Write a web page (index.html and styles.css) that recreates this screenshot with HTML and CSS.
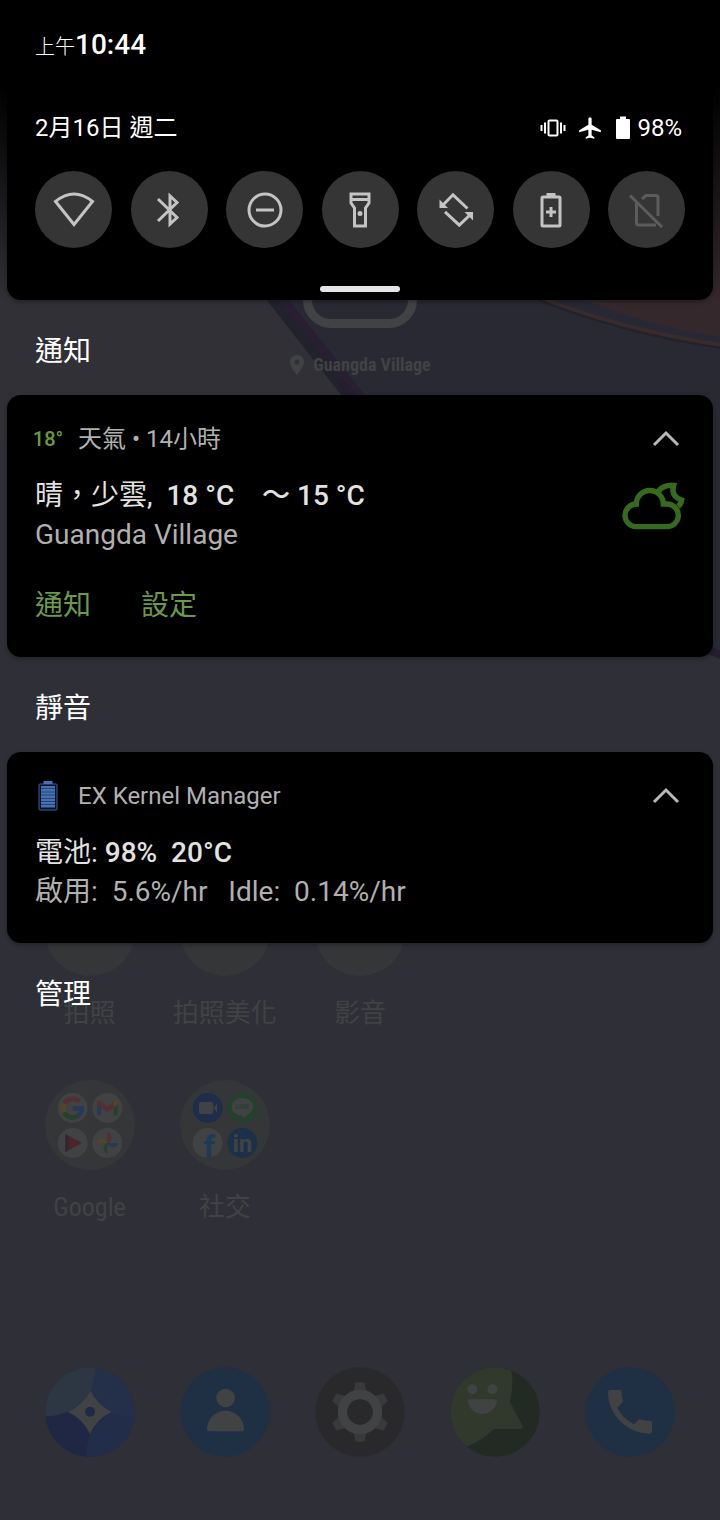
FILE: index.html
```html
<!DOCTYPE html>
<html lang="zh-TW">
<head>
  <meta charset="UTF-8">
  <meta name="viewport" content="width=device-width, initial-scale=1.0">
  <title>通知</title>
  <link rel="stylesheet" href="styles.css">
</head>
<body>

  <!-- dimmed home screen under the shade -->
  <div class="home">
    <svg class="wallpaper" viewBox="0 0 720 1520" preserveAspectRatio="none" aria-hidden="true">
      <rect width="720" height="1520" fill="#2f2f37"/>
      <path d="M0 0H272V300L360 394L400 440H0z" fill="#303036"/>
      <path d="M230 250L360 410Q480 560 720 655V0H230z" fill="#292934"/>
      <path d="M262 286L352 401" stroke="#22222c" stroke-width="10"/>
      <path d="M272 286L368 406" stroke="#281f32" stroke-width="9"/>
      <path d="M340 380Q480 570 730 658" stroke="#241e30" stroke-width="8" fill="none"/>
      <path d="M500 280Q610 330 720 346V0H500z" fill="#282834"/>
      <path d="M560 290Q640 325 720 337V0H560z" fill="#34282d"/>
      <path d="M530 294Q620 330 722 345" stroke="#392b2d" stroke-width="4" fill="none"/>
      <path d="M524 294Q620 334 722 348" stroke="#23222a" stroke-width="2" fill="none"/>
    </svg>

    <div class="clock-widget">
      <div class="clock-digit"></div>
      <div class="place">
        <svg width="16" height="22" viewBox="0 0 16 22" aria-hidden="true"><path fill-rule="evenodd" d="M8 1C4 1 1 4 1 8c0 5 7 13 7 13s7-8 7-13c0-4-3-7-7-7zm0 4.500a2.500 2.500 0 1 1 0 5 2.500 2.500 0 0 1 0-5z" fill="#414243"/></svg>
        <span>Guangda Village</span>
      </div>
    </div>

    <div class="folders">
      <div class="folder"><span class="folder-icon"></span><span class="folder-name">拍照</span></div>
      <div class="folder"><span class="folder-icon"></span><span class="folder-name">拍照美化</span></div>
      <div class="folder"><span class="folder-icon"></span><span class="folder-name">影音</span></div>
    </div>

    <div class="folders">
      <div class="folder">
        <svg class="folder-icon" viewBox="0 0 270 270" aria-hidden="true">
          <g fill="#414243"><circle cx="83" cy="84" r="45"/><circle cx="187" cy="84" r="45"/><circle cx="83" cy="189" r="45"/><circle cx="187" cy="189" r="45"/></g>
          <g fill="none" stroke-width="14">
            <path d="M103 65A28 28 0 0 0 58 71" stroke="#52302f"/>
            <path d="M58 71A28 28 0 0 0 58 98" stroke="#534628"/>
            <path d="M58 98A28 28 0 0 0 101 106" stroke="#25402f"/>
            <path d="M101 106A28 28 0 0 0 110 85H83" stroke="#273a55"/>
          </g>
          <path d="M156 65V106H168V78z" fill="#273a55"/>
          <path d="M218 65V106H206V78z" fill="#25402f"/>
          <path d="M156 65Q160 58 168 64L187 80L206 64Q214 58 218 65V74L187 97L156 74z" fill="#52302f"/>
          <path d="M206 64Q214 58 218 65V74L206 82z" fill="#534628"/>
          <path d="M61 162L111 189L61 216z" fill="#4e252d"/>
          <path d="M61 162L70 167V211L61 216z" fill="#302732"/>
          <path d="M73 170V208M98 182V196" stroke="#38242b" stroke-width="3" stroke-dasharray="4 4"/>
          <path d="M187 156A18 18 0 0 1 187 190z" fill="#52302f"/>
          <path d="M220 189A17 17 0 0 1 187 189z" fill="#273a55"/>
          <path d="M187 221A17 17 0 0 1 187 189z" fill="#25402f"/>
          <path d="M154 189A17 17 0 0 1 187 189z" fill="#534628"/>
        </svg>
        <span class="folder-name">Google</span>
      </div>
      <div class="folder">
        <svg class="folder-icon" viewBox="0 0 270 270" aria-hidden="true">
          <circle cx="83" cy="84" r="45" fill="#1f2d4a"/>
          <circle cx="187" cy="84" r="45" fill="#24402e"/>
          <circle cx="83" cy="189" r="45" fill="#414243"/>
          <circle cx="187" cy="189" r="45" fill="#1d3049"/>
          <rect x="57" y="66" width="43" height="36" rx="8" fill="#414243"/>
          <path d="M101 84L111 71V98z" fill="#414243"/>
          <path d="M187 54C207 54 219 66 219 80C219 96 200 107 187 114C186 110 187 107 183 106C166 105 155 94 155 80C155 66 168 54 187 54z" fill="#414243"/>
          <text class="logo-line" x="187" y="87">LINE</text>
          <text class="logo-f" x="88" y="233">f</text>
          <text class="logo-in" x="187" y="215">in</text>
        </svg>
        <span class="folder-name">社交</span>
      </div>
    </div>

    <div class="dock">
      <svg class="dock-icon" viewBox="0 0 270 270" aria-hidden="true">
        <clipPath id="disc"><circle cx="135" cy="135" r="134"/></clipPath>
        <g clip-path="url(#disc)">
          <rect width="270" height="270" fill="#212a46"/>
          <path d="M135 0H270V154Q225 150 195 134Q155 110 135 70z" fill="#242f49"/>
          <path d="M195 134Q225 150 270 154V270H125Q122 235 135 200z" fill="#222d4a"/>
          <path d="M0 150Q40 145 70 134Q115 155 135 200Q122 235 125 270H0z" fill="#1f2745"/>
          <path d="M135 68Q158 115 200 134Q155 155 135 201Q113 155 68 134Q113 115 135 68z" fill="#414243"/>
          <path d="M150 0Q150 60 122 94Q75 148 0 148V0z" fill="#2c3743"/>
        </g>
        <circle cx="135" cy="134" r="15" fill="#202a46"/>
      </svg>
      <svg class="dock-icon" viewBox="0 0 270 270" aria-hidden="true">
        <circle cx="135" cy="135" r="134" fill="#1f3044"/>
        <circle cx="137" cy="93" r="28" fill="#414243"/>
        <path d="M81 187A55 55 0 0 1 192 187Q192 193 187 193H86Q81 193 81 187z" fill="#414243"/>
      </svg>
      <svg class="dock-icon" viewBox="0 0 270 270" aria-hidden="true">
        <circle cx="135" cy="135" r="134" fill="#29292c"/>
        <g fill="#38393b">
          <path id="tooth" d="M114 80L121 49Q122 46 126 46H144Q148 46 149 49L156 80z"/>
          <use href="#tooth" transform="rotate(60 135 135)"/>
          <use href="#tooth" transform="rotate(120 135 135)"/>
          <use href="#tooth" transform="rotate(180 135 135)"/>
          <use href="#tooth" transform="rotate(240 135 135)"/>
          <use href="#tooth" transform="rotate(300 135 135)"/>
        </g>
        <circle cx="135" cy="135" r="52" fill="none" stroke="#414243" stroke-width="29"/>
        <circle cx="135" cy="135" r="38" fill="#29292c"/>
      </svg>
      <svg class="dock-icon" viewBox="0 0 270 270" aria-hidden="true">
        <g clip-path="url(#disc)">
          <rect width="270" height="270" fill="#222a24"/>
          <path d="M0 0H183Q192 55 180 105L218 178Q221 185 213 186H132Q95 222 45 241L0 200z" fill="#30392c"/>
        </g>
        <circle cx="67" cy="67" r="15" fill="#414243"/>
        <circle cx="127" cy="67" r="15" fill="#414243"/>
        <path d="M53 97H141A44 44 0 0 1 53 97z" fill="#414243"/>
      </svg>
      <svg class="dock-icon" viewBox="0 0 270 270" aria-hidden="true">
        <circle cx="135" cy="135" r="134" fill="#1f3045"/>
        <path d="M75 69H104Q110 69 110 75Q110 91 115 103L97 123Q113 155 147 172L163 157Q177 162 194 161Q201 161 201 167V193Q201 200 194 200C128 200 69 145 69 76Q69 69 75 69z" fill="#414243"/>
      </svg>
    </div>
  </div>

  <!-- notification shade -->
  <div class="shade">
    <div class="status-bar">
      <span class="ampm">上午</span><span class="time">10:44</span>
    </div>

    <div class="quick-settings">
      <div class="qs-header">
        <span>2月16日 週二</span>
        <div class="qs-status">
          <svg width="26" height="24" viewBox="0 0 26 24" aria-hidden="true"><path d="M1.500 9v6M5 6.500v11M24.500 9v6M21 6.500v11" stroke="#fff" stroke-width="2"/><rect x="8.500" y="4.500" width="9" height="15" rx="1" fill="none" stroke="#fff" stroke-width="2"/></svg>
          <svg class="plane" width="26" height="26" viewBox="0 0 24 24" aria-hidden="true"><path d="M22 16v-2l-8.500-5V3.500c0-.83-.67-1.500-1.500-1.500s-1.500.67-1.500 1.500V9L2 14v2l8.500-2.500V19L8 20.500V22l4-1 4 1v-1.500L13.500 19v-5.500L22 16z" fill="#fff"/></svg>
          <svg class="battery" width="14" height="24" viewBox="0 0 14 24" aria-hidden="true"><path d="M4 .5h6v2.500h3q1 0 1 1v18q0 1-1 1H1q-1 0-1-1V4q0-1 1-1h3z" fill="#fff"/></svg>
          <span>98%</span>
        </div>
      </div>

      <div class="tiles">
        <button class="tile" type="button" aria-label="Wi-Fi">
          <svg viewBox="-24 -24 48 48"><path d="M-18.500 -8.500Q0 -23.500 18.500 -8.500L0 14.500z"/></svg>
        </button>
        <button class="tile" type="button" aria-label="藍牙">
          <svg viewBox="-24 -24 48 48"><path d="M-11 -11L8 7.500L1 14V-14L8 -7.500L-11 11"/></svg>
        </button>
        <button class="tile" type="button" aria-label="零打擾">
          <svg viewBox="-24 -24 48 48"><circle r="16"/><path d="M-9 0H9"/></svg>
        </button>
        <button class="tile" type="button" aria-label="手電筒">
          <svg viewBox="-24 -24 48 48"><path d="M-9 -16H9V-7L5.500 -2V16H-5.500V-2L-9 -7zM-9 -10.500H9"/><circle class="solid" cy="3.500" r="2.500"/></svg>
        </button>
        <button class="tile" type="button" aria-label="自動旋轉">
          <svg viewBox="-24 -24 48 48"><path d="M-13 -5L-3 -15.200L11.500 -1.500M-11 1.800L3.300 15.200L14 5"/><path class="solid" d="M-16.500 -10.500V-2H-8zM17 10.500V2H8.500z"/></svg>
        </button>
        <button class="tile" type="button" aria-label="省電模式">
          <svg viewBox="-24 -24 48 48"><rect x="-9" y="-13" width="18" height="29" rx="1"/><path d="M-4.500 -15.500H4.500M-5 2H5M0 -3V7"/></svg>
        </button>
        <button class="tile tile-off" type="button" aria-label="行動數據" disabled>
          <svg viewBox="-24 -24 48 48"><path d="M-5 -11L-1 -14.500H9Q11 -14.500 11 -12.500V6M-10.500 -8V13Q-10.500 15 -8.500 15H9M-17 -14.500L15 17"/></svg>
        </button>
      </div>

      <div class="handle"></div>
    </div>

    <h2 class="section-title">通知</h2>

    <section class="card">
      <div class="card-header">
        <span class="app-icon app-temp">18°</span>
        <span class="app-name">天氣 • 14小時</span>
        <button class="collapse" type="button" aria-label="收合"><svg width="38" height="40" viewBox="0 0 38 40"><path d="M7 26L19 14L31 26"/></svg></button>
      </div>
      <div class="card-body">
        <div>
          <p class="card-title"><span>晴，少雲,</span>  18 °C    ～ 15 °C</p>
          <p class="card-text">Guangda Village</p>
        </div>
        <svg class="weather-icon" width="64" height="52" viewBox="186 240 192 156" aria-hidden="true">
          <path d="M232 380A34 34 0 0 1 232 312A40 40 0 0 1 313 312H324A34 34 0 0 1 324 380z"/>
          <path d="M298 273Q314 254 344 256Q334 288 368 300Q366 312 357 319"/>
        </svg>
      </div>
      <div class="card-actions">
        <button type="button">通知</button>
        <button type="button">設定</button>
      </div>
    </section>

    <h2 class="section-title">靜音</h2>

    <section class="card">
      <div class="card-header">
        <span class="app-icon">
          <svg width="20" height="30" viewBox="0 0 20 30" aria-hidden="true"><rect x="1" y="3" width="18" height="26" rx="1" fill="#0a1220" stroke="#3c5f98"/><path d="M5.500 0h9v3h-9z" fill="#4571b8"/><path d="M10 5v22" stroke="#4571b8" stroke-width="14" stroke-dasharray="2.600 .5"/></svg>
        </span>
        <span class="app-name">EX Kernel Manager</span>
        <button class="collapse" type="button" aria-label="收合"><svg width="38" height="40" viewBox="0 0 38 40"><path d="M7 26L19 14L31 26"/></svg></button>
      </div>
      <div class="card-body">
        <div>
          <p class="card-title"><span>電池:</span> 98%  20°C</p>
          <p class="card-text">啟用:  5.6%/hr   Idle:  0.14%/hr</p>
        </div>
      </div>
    </section>

    <button class="section-title" type="button">管理</button>
  </div>

</body>
</html>
```

FILE: styles.css
```css
* {
  box-sizing: border-box;
}

body {
  margin: 0;
  position: relative;
  min-height: 100vh;
  background-color: #2f2f37;
  color: #fff;
  font-family: Roboto, "Noto Sans CJK TC", sans-serif;
}

button {
  padding: 0;
  border: none;
  background: none;
  color: inherit;
  font: inherit;
  cursor: pointer;
}

h2, p {
  margin: 0;
}

/* home screen */
.home {
  position: absolute;
  inset: 0;
  display: flex;
  flex-direction: column;
  padding: 0 22px 63px;
  color: #414243;
}

.wallpaper {
  position: absolute;
  inset: 0;
  width: 100%;
  height: 100%;
}

.clock-widget {
  position: relative;
  display: flex;
  flex-direction: column;
  align-items: center;
  padding-top: 228px;
  margin-bottom: auto;
}

.clock-digit {
  width: 114px;
  height: 100px;
  border: 9px solid #414243;
  border-radius: 28px;
}

.place {
  display: flex;
  align-items: center;
  gap: 8px;
  margin-top: 25px;
  font-family: "Roboto Condensed", Roboto, sans-serif;
  font-size: 18px;
  line-height: 24px;
  font-weight: bold;
}

.folders {
  position: relative;
  display: grid;
  grid-template-columns: repeat(5, 1fr);
  margin-top: 52px;
}

.folder {
  display: flex;
  flex-direction: column;
  align-items: center;
  gap: 22px;
}

.folder-icon {
  width: 90px;
  height: 90px;
  border-radius: 50%;
  background-color: #343638;
}

.folder-name {
  font-family: "Roboto Condensed", Roboto, "Noto Sans CJK TC", sans-serif;
  font-size: 26px;
  line-height: 30px;
}

.logo-line, .logo-f, .logo-in {
  font-weight: bold;
  text-anchor: middle;
}

.logo-line {
  font-size: 19px;
  fill: #24402e;
}

.logo-f {
  font-size: 96px;
  fill: #1f3a55;
}

.logo-in {
  font-size: 72px;
  fill: #414243;
}

.dock {
  position: relative;
  display: grid;
  grid-template-columns: repeat(5, 1fr);
  justify-items: center;
  margin-top: 145px;
}

.dock-icon {
  width: 90px;
  height: 90px;
}

/* shade */
.shade {
  position: relative;
  background: linear-gradient(#000 84px, transparent 300px);
}

.status-bar {
  display: flex;
  align-items: baseline;
  height: 88px;
  padding: 25px 35px 23px;
  line-height: 40px;
}

.ampm {
  font-size: 20px;
  font-weight: 300;
}

.time {
  font-size: 28px;
  font-weight: 500;
}

.quick-settings {
  margin: 0 7px;
  padding: 20px 28px 8px;
  background-color: #000;
  border-radius: 0 0 14px 14px;
  box-shadow: 0 2px 4px rgba(0, 0, 0, 0.3);
}

.qs-header {
  display: flex;
  justify-content: space-between;
  font-size: 24px;
  line-height: 40px;
}

.qs-status {
  display: flex;
  align-items: center;
  padding-right: 3px;
}

.plane {
  margin: 0 13px 0 11px;
}

.battery {
  margin-right: 7px;
}

.tiles {
  display: flex;
  justify-content: space-between;
  margin-top: 23px;
}

.tile {
  display: flex;
  align-items: center;
  justify-content: center;
  width: 77px;
  height: 77px;
  border-radius: 50%;
  background-color: #353535;
  color: #c4c4c4;
}

.tile-off {
  color: #5c5c5c;
}

.tile svg {
  width: 48px;
  height: 48px;
  fill: none;
  stroke: currentColor;
  stroke-width: 3;
}

.tile .solid {
  fill: currentColor;
  stroke: none;
}

.handle {
  width: 80px;
  height: 6px;
  margin: 38px auto 0;
  border-radius: 3px;
  background-color: #e5e5e5;
}

.section-title {
  display: block;
  padding: 32px 35px 23px;
  font-size: 28px;
  line-height: 40px;
  font-weight: 400;
}

.card {
  margin: 0 7px;
  padding: 24px 28px 32px;
  background-color: #000;
  border-radius: 14px;
  box-shadow: 0 2px 4px rgba(0, 0, 0, 0.3);
}

.card-header {
  display: flex;
  align-items: center;
  height: 40px;
  color: #b0b0b0;
  font-size: 24px;
  line-height: 40px;
}

.app-icon {
  display: flex;
  justify-content: center;
  width: 26px;
  margin-right: 17px;
}

.app-temp {
  color: #6a9a3e;
  font-size: 20px;
  line-height: 36px;
  font-weight: 500;
}

.collapse {
  height: 40px;
  margin-left: auto;
}

.collapse svg {
  display: block;
  fill: none;
  stroke: #b8b8b8;
  stroke-width: 3;
}

.card-body {
  display: flex;
  justify-content: space-between;
  margin-top: 17px;
  font-size: 28px;
  line-height: 39px;
}

.card-title, .card-text {
  white-space: pre;
}

.card-title {
  color: #e2e2e2;
  font-weight: 500;
}

.card-title span {
  font-weight: 400;
}

.card-text {
  color: #b0b0b0;
}

.weather-icon {
  margin-top: 4px;
  fill: none;
  stroke: #366b1f;
  stroke-width: 16;
}

.card-actions {
  display: flex;
  gap: 50px;
  margin-top: 32px;
  color: #6a9a4a;
  font-size: 28px;
  line-height: 39px;
}
```
